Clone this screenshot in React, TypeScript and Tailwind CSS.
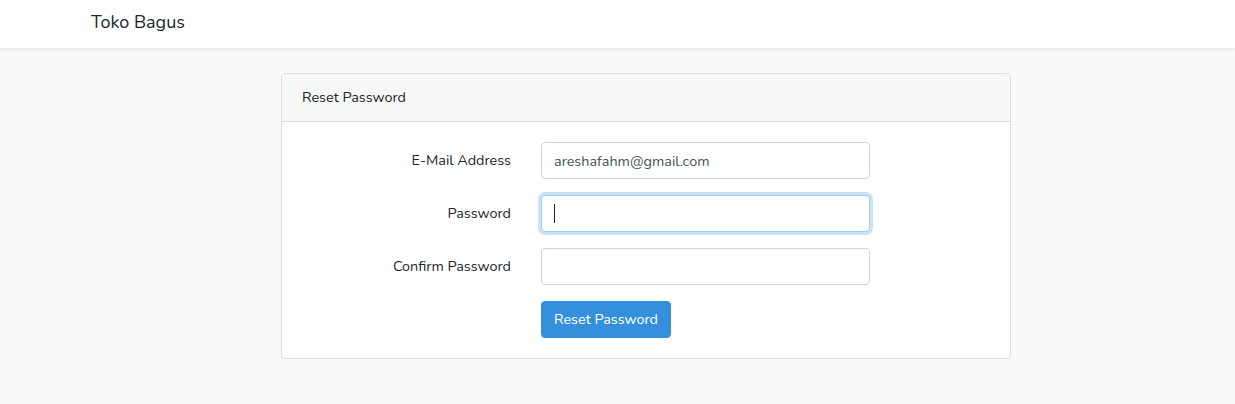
export default function App() {
  return (
    <div
      className="min-h-screen w-full bg-[#f8fafc] text-[14.4px] leading-[1.6] text-[#212529]"
      style={{ fontFamily: '"Nunito", "Lato", "Open Sans", sans-serif' }}
    >
      {/* navbar */}
      <nav className="flex h-[48px] items-center bg-white shadow-[0_2px_4px_rgba(0,0,0,0.075)]">
        <div className="pl-[91px] pb-[4px] text-[18px] text-[#212529]">Toko Bagus</div>
      </nav>

      <main className="pt-[25px] pb-[24px]">
        <div className="ml-[281px] w-[730px] rounded-[4px] border border-[rgba(0,0,0,0.125)] bg-white">
          <div className="border-b border-[rgba(0,0,0,0.125)] bg-[#f7f7f7] px-[20px] py-[12px]">
            Reset Password
          </div>
          <div className="flex flex-col gap-[16px] p-[20px]">
            <div className="flex items-center">
              <label className="w-[209px] text-right">E-Mail Address</label>
              <input
                readOnly
                defaultValue="areshafahm@gmail.com"
                className="ml-[30px] h-[37px] w-[329px] rounded-[4px] border border-[#ced4da] bg-white px-[12px] text-[14.4px] text-[#495057] outline-none"
              />
            </div>
            <div className="flex items-center">
              <label className="w-[209px] text-right">Password</label>
              <div className="relative ml-[30px]">
                <input
                  readOnly
                  type="password"
                  className="h-[37px] w-[329px] rounded-[4px] border border-[#a1cbef] bg-white px-[12px] text-[#495057] shadow-[0_0_0_3px_rgba(52,144,220,0.25)] outline-none"
                />
                <span className="absolute left-[13px] top-[9px] h-[19px] w-px bg-[#212529]" />
              </div>
            </div>
            <div className="flex items-center">
              <label className="w-[209px] text-right">Confirm Password</label>
              <input
                readOnly
                type="password"
                className="ml-[30px] h-[37px] w-[329px] rounded-[4px] border border-[#ced4da] bg-white px-[12px] outline-none"
              />
            </div>
            <div className="flex">
              <button className="ml-[239px] h-[37px] rounded-[4px] border border-[#3490dc] bg-[#3490dc] px-[12px] text-[14.4px] text-white">
                Reset Password
              </button>
            </div>
          </div>
        </div>
      </main>
    </div>
  );
}
